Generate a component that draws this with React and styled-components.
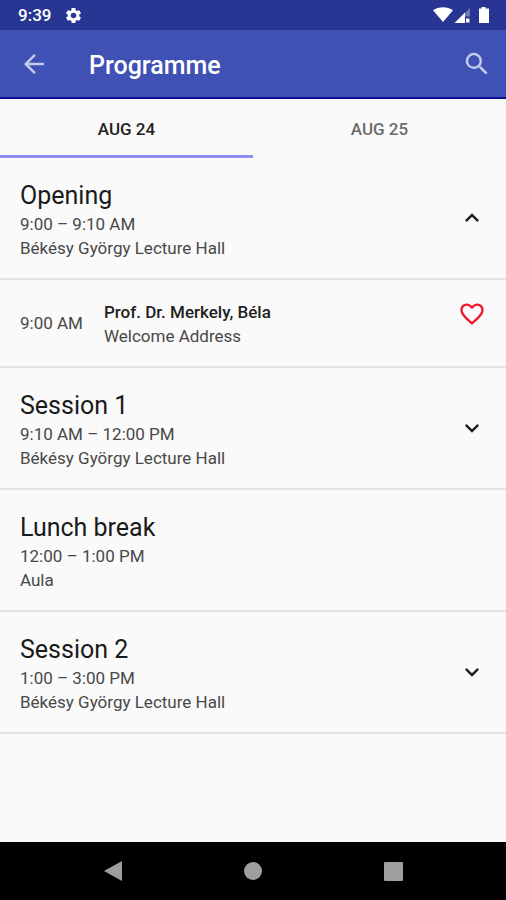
import React, { useState } from "react";
import styled, { createGlobalStyle } from "styled-components";
import {
  MdArrowBack,
  MdExpandLess,
  MdExpandMore,
  MdFavorite,
  MdFavoriteBorder,
  MdSearch,
  MdSettings,
} from "react-icons/md";

const GlobalStyle = createGlobalStyle`
  * {
    box-sizing: border-box;
  }

  body {
    margin: 0;
    background: #fafafa;
    font-family: Roboto, "Liberation Sans", sans-serif;
    color: #1f1f1f;
  }

  h1, h2, p {
    margin: 0;
    padding: 0;
  }
`;

/* ================= LAYOUT ================= */

const Screen = styled.div`
  display: flex;
  flex-direction: column;
  min-height: 100vh;
`;

const Main = styled.main`
  flex: 1;
`;

const IconButton = styled.button`
  display: flex;
  flex: none;
  padding: 0;
  border: 0;
  background: none;
  color: ${(p) => p.$color || "#1f1f1f"};
  font-size: ${(p) => p.$size || 30}px;
  cursor: pointer;
`;

/* ================= STATUS BAR ================= */

const StatusBar = styled.div`
  display: flex;
  align-items: center;
  gap: 13px;
  height: 30px;
  padding: 0 16px 0 18px;
  background: #283593;
  color: #ffffff;
  font-size: 19px;
`;

const Clock = styled.span`
  font-size: 17px;
  font-weight: 500;
  line-height: 20px;
`;

const StatusIcons = styled.div`
  display: flex;
  align-items: center;
  margin-left: auto;
`;

/* ================= APP BAR ================= */

const AppBar = styled.header`
  display: flex;
  align-items: center;
  height: 69px;
  padding: 0 14px 0 19px;
  border-bottom: 2px solid #0b0b96;
  background: #3f51b5;
`;

const Title = styled.h1`
  flex: 1;
  padding: 5px 0 0 40px;
  color: #ffffff;
  font-size: 25px;
  font-weight: 500;
  line-height: 32px;
`;

/* ================= TABS ================= */

const Tabs = styled.div`
  display: flex;
`;

const Tab = styled.button`
  flex: 1;
  height: 59px;
  padding: 3px 0 0;
  border: 0;
  border-bottom: 3px solid ${(p) => (p.$active ? "#8f8ff8" : "transparent")};
  background: none;
  color: ${(p) => (p.$active ? "#212121" : "#6b6b6b")};
  font-family: inherit;
  font-size: 17px;
  font-weight: 500;
  line-height: 24px;
  cursor: pointer;
`;

/* ================= SESSIONS ================= */

const Row = styled.div`
  display: flex;
  align-items: center;
  padding: 0 20px;
  border-bottom: 2px solid #e4e4e4;
`;

const SessionInfo = styled.div`
  flex: 1;
  padding: 22px 0 18px;
`;

const SessionTitle = styled.h2`
  color: #1a1a1a;
  font-size: 25px;
  font-weight: 400;
  line-height: 32px;
`;

const Line = styled.p`
  color: #484848;
  font-size: 17px;
  line-height: 24px;
`;

const TalkRow = styled(Row)`
  gap: 21px;
`;

const TalkInfo = styled.div`
  flex: 1;
  padding: 20px 0 18px;
`;

const Speaker = styled(Line)`
  color: #212121;
  font-weight: 500;
`;

const LikeButton = styled(IconButton)`
  align-self: flex-start;
  margin-top: 20px;
`;

/* ================= NAVIGATION BAR ================= */

const NavBar = styled.nav`
  display: flex;
  align-items: center;
  justify-content: center;
  gap: 108px;
  height: 58px;
  background: #000000;
`;

const NavButton = styled(IconButton)`
  justify-content: center;
  width: 32px;
`;

/* ================= DATA ================= */

const days = ["AUG 24", "AUG 25"];

const sessions = [
  {
    title: "Opening",
    time: "9:00 – 9:10 AM",
    place: "Békésy György Lecture Hall",
    expandable: true,
    talks: [
      {
        time: "9:00 AM",
        speaker: "Prof. Dr. Merkely, Béla",
        topic: "Welcome Address",
      },
    ],
  },
  {
    title: "Session 1",
    time: "9:10 AM – 12:00 PM",
    place: "Békésy György Lecture Hall",
    expandable: true,
    talks: [],
  },
  {
    title: "Lunch break",
    time: "12:00 – 1:00 PM",
    place: "Aula",
    expandable: false,
    talks: [],
  },
  {
    title: "Session 2",
    time: "1:00 – 3:00 PM",
    place: "Békésy György Lecture Hall",
    expandable: true,
    talks: [],
  },
];

/* ================= COMPONENTS ================= */

function Talk({ talk }) {
  const [liked, setLiked] = useState(false);

  return (
    <TalkRow>
      <Line>{talk.time}</Line>
      <TalkInfo>
        <Speaker>{talk.speaker}</Speaker>
        <Line>{talk.topic}</Line>
      </TalkInfo>
      <LikeButton
        $color="#f0142f"
        $size={28}
        aria-label="Favourite"
        aria-pressed={liked}
        onClick={() => setLiked(!liked)}
      >
        {liked ? <MdFavorite /> : <MdFavoriteBorder />}
      </LikeButton>
    </TalkRow>
  );
}

function Session({ session, defaultOpen }) {
  const [open, setOpen] = useState(defaultOpen);

  return (
    <section>
      <Row>
        <SessionInfo>
          <SessionTitle>{session.title}</SessionTitle>
          <Line>{session.time}</Line>
          <Line>{session.place}</Line>
        </SessionInfo>
        {session.expandable && (
          <IconButton
            $size={28}
            aria-label={`Toggle ${session.title}`}
            aria-expanded={open}
            onClick={() => setOpen(!open)}
          >
            {open ? <MdExpandLess /> : <MdExpandMore />}
          </IconButton>
        )}
      </Row>
      {open && session.talks.map((talk) => <Talk key={talk.time} talk={talk} />)}
    </section>
  );
}

function App() {
  const [day, setDay] = useState(0);

  return (
    <Screen>
      <GlobalStyle />

      {/* ===== STATUS BAR ===== */}
      <StatusBar>
        <Clock>9:39</Clock>
        <MdSettings />
        <StatusIcons>
          <svg width="58" height="18" viewBox="0 0 58 18" fill="#ffffff">
            <path d="M1 4.200C6.600 0.200 15.400 0.200 21 4.200L11 16Z" />
            <path d="M38 2V10.500H33V7Z" opacity="0.35" />
            <path d="M22.500 17L33 6.500V17Z" />
            <path d="M34 12.500H37.500V16.500H34Z" />
            <path d="M47 2.500H49.500V1H53.500V2.500H57V17H47Z" />
          </svg>
        </StatusIcons>
      </StatusBar>

      {/* ===== APP BAR ===== */}
      <AppBar>
        <IconButton $color="#c5cbe9" aria-label="Back">
          <MdArrowBack />
        </IconButton>
        <Title>Programme</Title>
        <IconButton $color="#c5cbe9" aria-label="Search">
          <MdSearch />
        </IconButton>
      </AppBar>

      {/* ===== DAYS ===== */}
      <Tabs role="tablist">
        {days.map((label, i) => (
          <Tab
            key={label}
            role="tab"
            aria-selected={day === i}
            $active={day === i}
            onClick={() => setDay(i)}
          >
            {label}
          </Tab>
        ))}
      </Tabs>

      {/* ===== PROGRAMME ===== */}
      <Main>
        {sessions.map((session, i) => (
          <Session key={session.title} session={session} defaultOpen={i === 0} />
        ))}
      </Main>

      {/* ===== NAVIGATION BAR ===== */}
      <NavBar>
        <NavButton aria-label="Back">
          <svg width="20" height="22" viewBox="0 0 20 22" fill="#9e9e9e">
            <path d="M19 1V21L1 11Z" />
          </svg>
        </NavButton>
        <NavButton aria-label="Home">
          <svg width="20" height="20" viewBox="0 0 20 20" fill="#9e9e9e">
            <circle cx="10" cy="10" r="9" />
          </svg>
        </NavButton>
        <NavButton aria-label="Overview">
          <svg width="20" height="20" viewBox="0 0 20 20" fill="#9e9e9e">
            <rect x="1" y="1" width="19" height="19" rx="1" />
          </svg>
        </NavButton>
      </NavBar>
    </Screen>
  );
}

export default App;
